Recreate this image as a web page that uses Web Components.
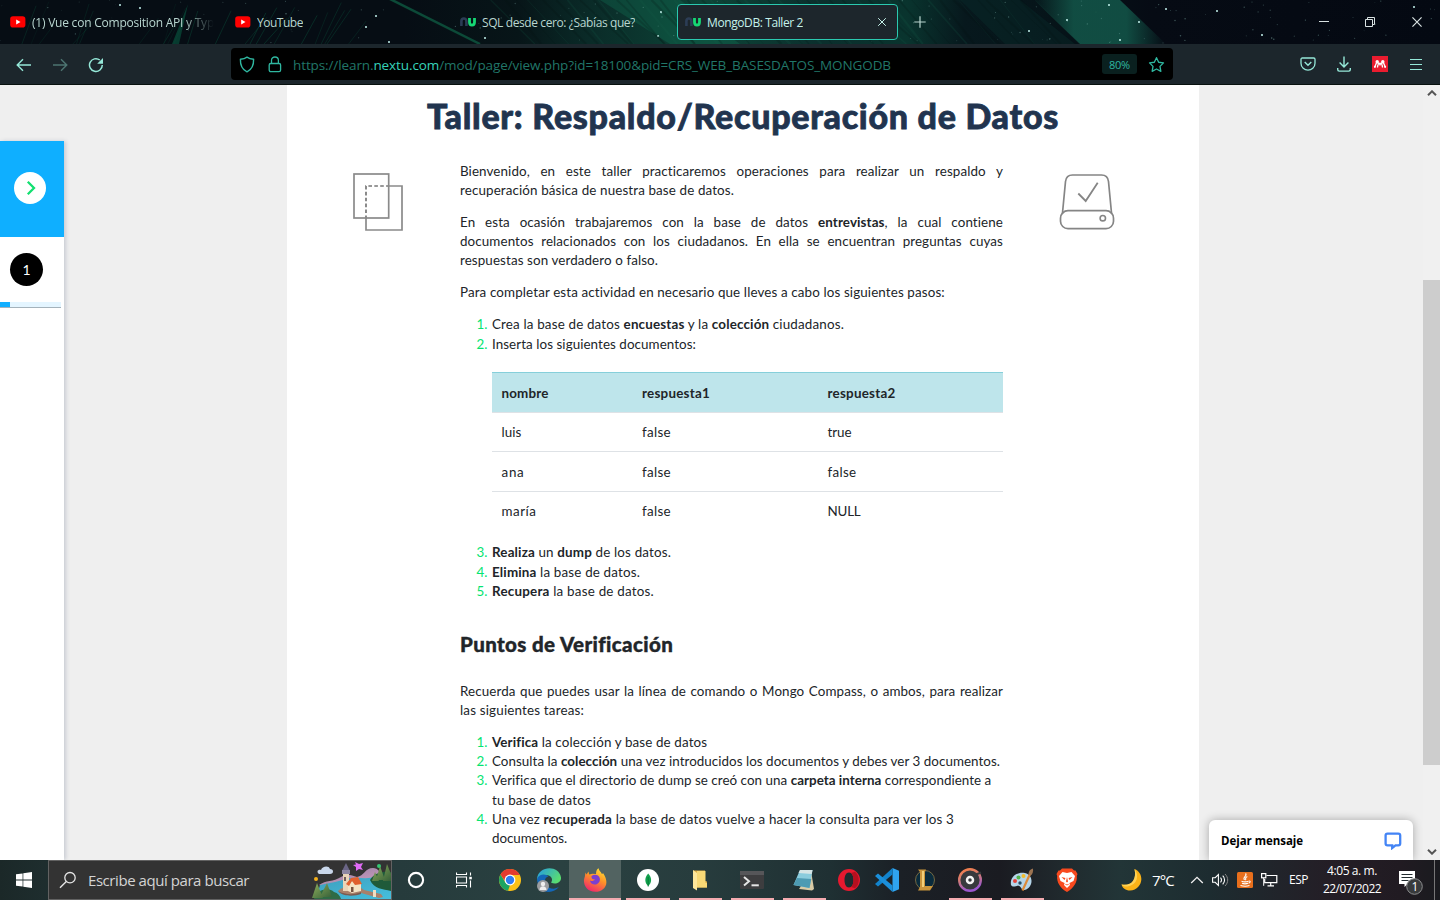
<!DOCTYPE html>
<html lang="es">
<head>
<meta charset="utf-8">
<title>MongoDB: Taller 2</title>
<style>
html,body{margin:0;height:100%;overflow:hidden}
body{background:#efefef;font-family:"Open Sans","Noto Sans",sans-serif}
</style>
</head>
<body>
<desktop-screen></desktop-screen>
<script>
const ICONS = {
 yt:['16 12','<rect x=".2" y=".3" width="15.2" height="11.2" rx="2.8" fill="#f00"/><path d="M6.2 3.4v5L10.5 5.9z" fill="#fff"/>'],
 nu:['16 10','<path d="M1.4 9V4.2C1.4.6 6.4.6 6.4 4.2V9" fill="none" stroke="#2c3d55" stroke-width="2.6"/><path d="M9.5 1v4.200c0 3.800 5 3.800 5 0V1" fill="none" stroke="#16d774" stroke-width="2.800"/>'],
 close:['10 10','<path d="M1.2 1.2l7.6 7.6M8.8 1.2L1.2 8.8" stroke="currentColor" fill="none"/>'],
 plus:['12 12','<path d="M6 .3v11.4M.3 6h11.4" stroke="currentColor" stroke-width="1.2"/>'],
 min:['10 10','<path d="M0 4.5h10" stroke="currentColor"/>'],
 max:['10 10','<path d="M.5 2.5h7v7h-7zM2.5 2.5v-2h7v7h-2" fill="none" stroke="currentColor"/>'],
 back:['16 14','<path d="M15 7H1.5M7 1.2L1.2 7 7 12.8" fill="none" stroke="currentColor" stroke-width="1.4"/>'],
 fwd:['16 14','<path d="M1 7h13.5M9 1.2L14.8 7 9 12.8" fill="none" stroke="currentColor" stroke-width="1.4"/>'],
 reload:['16 16','<path d="M14.3 8A6.4 6.4 0 1 1 11.8 3" fill="none" stroke="currentColor" stroke-width="1.5"/><path d="M15 1v5.8H9.2z" fill="currentColor"/>'],
 shield:['16 17','<path d="M8 1.1c2 1.5 4.2 2 6.6 2.2.2 5.700-1.700 10.200-6.600 12.600C3.100 13.500 1.200 9 1.400 3.300 3.800 3.100 6 2.600 8 1.100z" fill="none" stroke="currentColor" stroke-width="1.4" stroke-linejoin="round"/>'],
 lock:['14 17','<rect x="1.200" y="7.500" width="11.400" height="8.200" rx="1.600" fill="none" stroke="currentColor" stroke-width="1.300"/><path d="M3.500 7.500V4.300c0-4.400 6.900-4.400 6.900 0v3.200" fill="none" stroke="currentColor" stroke-width="1.300"/>'],
 star:['18 17','<path d="M9 1.300l2.300 4.800 5.100.7-3.700 3.700.9 5.200L9 13.300l-4.600 2.400.9-5.200L1.600 6.800l5.100-.7z" fill="none" stroke="currentColor" stroke-width="1.400" stroke-linejoin="round"/>'],
 pocket:['16 14','<path d="M2.300 1h11.400c.8 0 1.300.5 1.300 1.300v4c0 9-14 9-14 0v-4C1 1.500 1.500 1 2.300 1z" fill="none" stroke="currentColor" stroke-width="1.300"/><path d="M4.700 5L8 8.200 11.300 5" fill="none" stroke="currentColor" stroke-width="1.400"/>'],
 down:['14 16','<path d="M7 .5v10.300M2.600 6.500L7 10.900l4.400-4.400M.7 12v1.600c0 1 .6 1.500 1.500 1.500h9.600c.9 0 1.500-.5 1.500-1.500V12" fill="none" stroke="currentColor" stroke-width="1.400"/>'],
 mend:['16 16','<rect width="16" height="16" fill="#ea1c2f"/><path d="M2.600 11.400L4.600 6.500M8 9.500V6.500M5.300 6l2 2.500M10.700 6l-2 2.500M11.400 6.500l2 4.900M6 8.500l-.6 3M10 8.500l.6 3" stroke="#fff" stroke-width="1.300" fill="none"/><circle cx="5.200" cy="5.700" r="1.700" fill="#fff"/><circle cx="10.800" cy="5.700" r="1.700" fill="#fff"/><circle cx="2.900" cy="10.700" r="1" fill="#fff"/><circle cx="13.100" cy="10.700" r="1" fill="#fff"/>'],
 menu:['12 11','<path d="M0 .5h12M0 5.500h12M0 10.500h12" stroke="currentColor" stroke-width="1"/>'],
 up:['10 6','<path d="M1 5.200L5 1.300l4 3.900" fill="none" stroke="currentColor" stroke-width="2"/>'],
 dn:['10 6','<path d="M1 .8l4 3.900L9 .8" fill="none" stroke="currentColor" stroke-width="2"/>'],
 go:['32 32','<circle cx="16" cy="16" r="16" fill="#fff"/><path d="M13.800 9.800l6.200 6.200-6.200 6.200" fill="none" stroke="#12e070" stroke-width="2.300"/>'],
 layers:['50 58','<path d="M36 13h13v44H13V46" fill="none" stroke="#8a8a8a" stroke-width="1.700"/><path d="M13 46V13h23" fill="none" stroke="#777" stroke-width="1.700" stroke-dasharray="3.600 2.300"/><rect x="1" y="1" width="34.700" height="44" fill="none" stroke="#8a8a8a" stroke-width="1.700"/>'],
 drive:['56 58','<path d="M3.400 41L6.500 8.500C7 4 9.500 2 13.500 2h29c4 0 6.500 2 7 6.500L52.600 41" fill="none" stroke="#858585" stroke-width="1.700"/><rect x="1.500" y="37.700" width="53" height="18" rx="7.500" fill="none" stroke="#858585" stroke-width="1.700"/><circle cx="43.800" cy="45.200" r="2.700" fill="none" stroke="#858585" stroke-width="1.600"/><path d="M19.300 20.500l7.400 7.500L38.700 9.700" fill="none" stroke="#858585" stroke-width="1.800"/>'],
 chat:['18 18','<path d="M3.500 1.600h10.800c1.200 0 1.900.7 1.900 1.900v8c0 1.200-.7 1.900-1.900 1.900h-2.800L8.200 16v-2.600H3.500c-1.200 0-1.900-.7-1.900-1.900v-8c0-1.200.7-1.900 1.900-1.900z" fill="none" stroke="#4384f5" stroke-width="2.300"/>'],
 win:['16 16','<path d="M0 2.300L6.600 1.400v6.200H0zM7.300 1.300L16 0v7.600H7.300zM0 8.400h6.600v6.200L0 13.700zM7.300 8.400H16V16l-8.700-1.200z" fill="#fff"/>'],
 search:['18 18','<circle cx="11" cy="6.700" r="5.200" fill="none" stroke="#e6e6e6" stroke-width="1.300"/><path d="M7.300 10.400L1 16.700" stroke="#e6e6e6" stroke-width="1.400"/>'],
 cortana:['16 16','<circle cx="8" cy="8" r="6.300" fill="none" stroke="#fff" stroke-width="1.900"/>'],
 task:['16 16','<path d="M.5.500v2h10v-2M.5 15.500v-2h10v2M.5 5h10v6H.5zM14.500.500v3M14.500 8.500v7" fill="none" stroke="#fff" stroke-width="1.100"/><rect x="13.300" y="4.800" width="2.500" height="2.500" fill="#fff"/>'],
 chrome:['24 24','<circle cx="12" cy="12" r="11" fill="#fbc116"/><path d="M2.500 6.500L7.600 14.800 12 17l-2 5.800A11 11 0 0 1 2.500 6.500z" fill="#1da462"/><path d="M2.500 6.500A11 11 0 0 1 21.800 7H12L7 13z" fill="#e33b2e"/><circle cx="12" cy="12" r="5.400" fill="#fff"/><circle cx="12" cy="12" r="4.200" fill="#2f7df0"/>'],
 edge:['24 24','<defs><linearGradient id="a" x2="1" y2=".5"><stop stop-color="#239be5"/><stop offset="1" stop-color="#59dc72"/></linearGradient></defs><path d="M0 11C1-2.500 22-3.500 24 9.500c.6 5.500-6 7.500-10 5 2.600-3.500 0-7.200-4.500-7.200C4 7.300 0 10 0 15z" fill="url(#a)"/><path d="M0 11c2-5.500 9-5.700 11.500-2.500C6.500 9 6 19 14.500 20.500c3 .5 5.500-.5 7.500-1.700C16 27 1 26 0 11z" fill="#1467b8"/><circle cx="6" cy="18" r="6" fill="#9b9da0"/><circle cx="6" cy="16" r="2.200" fill="#eee"/><path d="M2.500 22c0-5 7-5 7 0z" fill="#eee"/>'],
 firefox:['24 24','<defs><linearGradient id="a" x1=".8" x2=".3" y2="1"><stop stop-color="#ffe436"/><stop offset=".45" stop-color="#ff9128"/><stop offset="1" stop-color="#f0256d"/></linearGradient></defs><path d="M2.500 4.500l1 2 2-3 .7 3 3-.8L13 6c0-3 1-5 2.600-5.800.3 2.600 2.400 3.300 3.300 5.800l1.300-.7C28 17 20 23.800 12.500 23.800 4 23.800.5 17 1 12c.2-2 1-3 1-4.500z" fill="url(#a)"/><path d="M8.500 8c5-3.500 10 1 8 5.500-2 4.500-9 4-9.500-1 2 1 3.500.5 5-1-2 .2-4-1-3.500-3.500z" fill="#7b3fd0"/>'],
 mongo:['24 24','<circle cx="12" cy="12" r="11" fill="#fff"/><path d="M12.200 5.500c4.300 4.500 3.400 9.500 0 12.500-3.500-3-4.200-8 0-12.500z" fill="#11a04c"/><path d="M12.200 9v9.500" stroke="#067d3a"/>'],
 folder:['24 24','<path d="M5 2.500H17V13l2 .5v6H6.500z" fill="#dfae46"/><path d="M9 3h8.500v12h1.500v4.500H9z" fill="#f9d976"/><path d="M5 2l4 3v17.500L5 20z" fill="#ffe79b"/>'],
 term:['24 24','<rect y="3" width="24" height="18" rx="1" fill="#3d3d3f"/><rect y="3" width="24" height="4" fill="#565659"/><path d="M4 9l5 4.200-5 4.200" fill="none" stroke="#e5e5e5" stroke-width="2"/><path d="M11.500 17.300h7.300" stroke="#e5e5e5" stroke-width="2"/>'],
 note:['24 24','<path d="M19 3l3 18-2 1.500L7 21z" fill="#d9cba6"/><path d="M8 2h12.500L17.500 20 1.500 17z" fill="#8accdd"/><path d="M8 2h12.500L19.700 6 6.500 5z" fill="#d5e5e6"/><path d="M5 10l14.300 1-1.800 9L1.500 17z" fill="#4d9bb3"/>'],
 opera:['24 24','<path fill-rule="evenodd" d="M12 1a11 11 0 1 0 0 22 11 11 0 0 0 0-22zm0 3.500c3 0 4.500 3.500 4.500 7.500S15 19.500 12 19.500 7.500 16 7.500 12 9 4.500 12 4.500z" fill="#e6192f"/><path d="M18 3.700A11 11 0 0 1 18 20.300L14 19c3.300-3 3.300-11 0-14z" fill="#b5101f"/>'],
 code:['24 24','<path d="M17.500 0L24 2.800V21.200L17.500 24z" fill="#2fa4f0"/><path d="M17.500 0v6.500L3 18.500 0 16z" fill="#1283cc"/><path d="M0 8l3-2.500L17.500 17.500V24z" fill="#1b8fda"/>'],
 lol:['24 24','<circle cx="12" cy="12" r="9.500" fill="#0a2b3c" stroke="#8b7946" stroke-width=".8"/><path d="M5 1.500h8L12 4v14h8l-3 4.500H5L7 19V4z" fill="#c9953b"/><path d="M9 3h2v16H9z" fill="#f1cf79"/>'],
 groove:['24 24','<defs><linearGradient id="a" y2="1" x2=".3"><stop stop-color="#f98045"/><stop offset=".5" stop-color="#cf7a78"/><stop offset="1" stop-color="#9a56cf"/></linearGradient></defs><circle cx="12" cy="12" r="10.800" fill="#37393d" stroke="url(#a)" stroke-width="2.400"/><path d="M18 6.500l5-2" stroke="#37393d" stroke-width="2"/><circle cx="12" cy="12" r="3" fill="#37393d" stroke="#f4f4f4" stroke-width="2.500"/>'],
 paint:['24 24','<path d="M1 17C-.5 8 8 3.500 15 5c8 2 8 11 3.500 15-4 3.500-7 1.500-8-1-2.500-3.500-7 2-9.500-2z" fill="#b5d5e9"/><circle cx="5" cy="13" r="2" fill="#e4433a"/><circle cx="8.500" cy="9.500" r="2" fill="#51b44a"/><circle cx="13.500" cy="8" r="2" fill="#f2bd2d"/><circle cx="10" cy="15" r="1.700" fill="#244d66"/><path d="M12.500 22.500L20 6" stroke="#dc8a38" stroke-width="2.200"/><path d="M18.500 6c0-3 2-5 4.500-5.500.5 3-.5 6-2.500 7z" fill="#9c7452"/>'],
 brave:['24 24','<path d="M7 .5h10l2 2h1.500L22.500 6l-.7 2c.7 6-3 12-9.800 16C5 20 1.500 14 2.200 8L1.500 6l2-3.500H5z" fill="#f8491e"/><path d="M7.500 4l4.500 1 4.500-1 3.500 4-1.500 5-4 2 .5 2L12 20l-3-3 .5-2-4-2L4 8z" fill="#fff"/><path d="M6.500 9l4 1-1 2zM17.500 9l-4 1 1 2zM12 9l-1 4.500 1 1 1-1zM9 15.500l3 1 3-1-3 2z" fill="#f8491e"/>'],
 moon:['24 24','<path d="M14.500 1C26 6 22 22 10 22.500 5.500 22.500 2.500 20 1.500 16.500 11 18.500 17 12 14.500 1z" fill="#fbb318"/><path d="M14.500 1c5 6 3 16-7 17.500-3 .2-4.500-.5-6-2C11 18.500 17 12 14.500 1z" fill="#ffd256"/>'],
 chev:['14 8','<path d="M1.200 7L7 1.300 12.800 7" fill="none" stroke="#f1f1f1" stroke-width="1.300"/>'],
 sound:['17 14','<path d="M.6 4.700h2.600L6.400 1.600v10.800L3.200 9.300H.6z" fill="none" stroke="#fff" stroke-width="1.100"/><path d="M8.500 4.700c1.300 1.300 1.300 3.300 0 4.600M10.700 2.700c2.500 2.500 2.500 6.100 0 8.600" fill="none" stroke="#fff" stroke-width="1.100"/><path d="M13 1c3.600 3.500 3.600 8.500 0 12" fill="none" stroke="#888" stroke-width="1"/>'],
 java:['16 16','<rect width="16" height="16" rx="1.500" fill="#e86f1c"/><path d="M8.500 1.500c2.500 2.500-3.500 3.300-1 6.500M10.300 4.500C7 6 9.500 6.500 8.500 8.300M4.500 9.200c2 .8 5 .8 7 0M5 11.300c2 .7 4 .7 6 0M3.500 13.500c3 .9 6.500.9 9 0M11.800 9c2-.3 1.800 1.600-.3 2.200" fill="none" stroke="#fff" stroke-width="1.100"/>'],
 net:['17 14','<path d="M5.500 2.500h10.300v7.200H3.700V6M9.700 9.700v3M6.500 12.900h6.500" fill="none" stroke="#fff" stroke-width="1.200"/><rect x=".6" y=".6" width="4.200" height="4.200" fill="none" stroke="#fff" stroke-width="1.200"/><path d="M2.700 4.800v8" stroke="#fff"/>'],
 notif:['26 26','<path d="M1 1h16v13H9.500L6.500 17v-3H1z" fill="#fff"/><path d="M3.500 4.500h11M3.500 7.500h11M3.500 10.500h7" stroke="#222b2f" stroke-width="1.200"/><circle cx="16.500" cy="16.500" r="7.800" fill="#383a3c" stroke="#8c8d8e"/>'],
 village:['79 38','<defs><linearGradient id="w" y2="1"><stop stop-color="#3d9dbd"/><stop offset="1" stop-color="#45bfdd"/></linearGradient><linearGradient id="m" y2="1"><stop stop-color="#8f7aa0"/><stop offset="1" stop-color="#d9a5c4"/></linearGradient><linearGradient id="t" y2="1"><stop stop-color="#8fae5c"/><stop offset="1" stop-color="#355f38"/></linearGradient></defs><path d="M7 24c7-5 14-3 22-8 6-4 10-2 16 0 7-1 8-9 16-9 5 0 7 5 13 8l5 2v8H10z" fill="url(#m)"/><path d="M8 24c10-2 20-4 30-7 10-1 18 2 26-2l15 3v20H4z" fill="url(#w)"/><path d="M58 19c4-7 12-9 21-8v19c-8-2-17-2-21-11z" fill="#1f5a3a"/><path d="M64 19l4-14 5 14zM71 20l4-17 4 10v7zM60 20l3-9 4 9z" fill="url(#t)"/><path d="M26 30c6-6 20-6 26-1l17 4 2 3-4 1-18-5c-7 3-20 2-23-2z" fill="#a9806a"/><path d="M26 30c7 4 17 4 23 1v2c-8 3-20 2-23-3z" fill="#7c5a4e"/><path d="M2 38c1-8 14-13 20-7 4 1 6 4 7 7z" fill="#2f6b45"/><path d="M0 37l5-15 6 15zM8 36l7-14 5 14z" fill="url(#t)"/><path d="M31 13h6v17h-6z" fill="#ead5b8"/><path d="M32 16h2v4h-2z" fill="#6f5c58"/><path d="M30.500 9L34 2l3.500 7z" fill="#6a6585"/><path d="M30 9h8v4h-8z" fill="#8d87a2"/><path d="M36 23l4-3 9 3v7l-9 2-4-2z" fill="#f4e3c5"/><path d="M34 23l5-6 7-1 4 7-7 1-3-4-3 5z" fill="#e0602f"/><path d="M39 26h2.500v5H39z" fill="#765240"/><path d="M61 29h3v7h-3z" fill="#f1dfc3"/><path d="M7 13c-3-2-1-5 2-4 1-4 8-5 9-1 4 0 4 5 0 5z" fill="#c9d7ea"/><path d="M43 1l4 2 4-1-2 4 2 3-4-1-3 2v-4l-3-2 3-.5z" fill="#e06bf5"/><circle cx="67" cy="5" r="2" fill="#35c773"/><circle cx="4" cy="18" r="2" fill="#f6b11b"/>']
};
const define=(name,css,html,extra)=>customElements.define(name,class extends HTMLElement{
 constructor(){super();this.attachShadow({mode:'open'}).innerHTML=`<style>:host{box-sizing:border-box}*{box-sizing:border-box}${css}</style>${typeof html==='function'?html(this):html}`}
 connectedCallback(){extra&&extra(this)}
});

/* <ui-icon name w h> */
define('ui-icon',':host{display:inline-flex;flex:none}span,svg{display:block}','<span></span>',el=>{
 const [vb,body]=ICONS[el.getAttribute('name')];const [w,h]=vb.split(' ');
 el.shadowRoot.querySelector('span').innerHTML=`<svg width="${el.getAttribute('w')||w}" height="${el.getAttribute('h')||h}" viewBox="0 0 ${vb}">${body}</svg>`;
});
/* <fit-text w> one line of text tracked to a given measure; "spread" widens the word gaps instead */
define('fit-text',':host{display:inline-block;flex:none;white-space:nowrap}:host([spread]){display:block;text-align-last:justify}','<span><slot></slot></span>',el=>{
 const w=+el.getAttribute('w');
 if(el.hasAttribute('spread')){el.style.width=w+'px';return}
 el.style.letterSpacing='0px';
 const nat=el.shadowRoot.querySelector('span').getBoundingClientRect().width;
 el.style.letterSpacing=((w-nat)/el.textContent.length)+'px';
 el.style.width=w+'px';
});

/* theme picture behind the tab strip */
const stars=()=>{let s=7,o='';const r=()=>(s=(s*16807)%2147483647)/2147483647;
 for(let i=0;i<130;i++){const x=r()*1440,y=r()*44,a=.15+r()*.3;o+=`<circle cx="${x.toFixed(1)}" cy="${y.toFixed(1)}" r="${(.4+r()*.35).toFixed(2)}" fill="#9fd8cf" opacity="${a.toFixed(2)}"/>`}
 for(const [x,y] of [[140,8],[120,5],[376,16],[366,27],[389,42],[485,38],[661,12],[658,36],[1029,31],[1067,20],[1120,40],[1139,22],[1262,35],[1217,11],[1414,7],[1166,9],[1109,5]])o+=`<circle cx="${x}" cy="${y}" r="1" fill="#c5f3ee"/>`;
 for(let i=0;i<46;i++){const x=490+i*12+r()*8;o+=`<path d="M${x} 0l${34+r()*16} 44" stroke="${i%3?'#04100f':'#15604a'}" stroke-width="${(.5+r()*2).toFixed(1)}" opacity=".18"/>`}
 for(let i=0;i<24;i++){const x=20+r()*330;o+=`<path d="M${x} 44l${10+r()*14} -${20+r()*24}" stroke="#0d6a4a" stroke-width=".8" opacity="${(.12+r()*.3).toFixed(2)}"/>`}
 return o};
define('tab-strip',`:host{display:grid;height:44px;background:#060c13;overflow:hidden;font-size:12px;color:#b9d6d0}
 svg.sky,.row{grid-area:1/1}
 .row{display:flex;align-items:center;height:44px;position:relative}
 `,()=>`<svg class="sky" width="1440" height="44"><defs><linearGradient id="g"><stop stop-color="#060d14"/><stop offset=".28" stop-color="#060d14"/><stop offset=".36" stop-color="#071518"/><stop offset=".41" stop-color="#0a2b28"/><stop offset=".49" stop-color="#0d4437"/><stop offset=".57" stop-color="#0b2f2d"/><stop offset=".63" stop-color="#09342e"/><stop offset=".67" stop-color="#07181d"/><stop offset=".73" stop-color="#061419"/><stop offset=".8" stop-color="#060b14"/><stop offset="1" stop-color="#040912"/></linearGradient><linearGradient id="b"><stop stop-color="#125347" stop-opacity="0"/><stop offset=".3" stop-color="#125347"/><stop offset=".7" stop-color="#125347"/><stop offset="1" stop-color="#125347" stop-opacity="0"/></linearGradient></defs>
 <rect width="1440" height="44" fill="url(#g)"/><path d="M600 0h80l60 44h-70z" fill="#117052" opacity=".35"/><path d="M1034 0h86l46 44h-86z" fill="url(#b)" opacity=".9"/><path d="M960 0h60l55 44h-70z" fill="#0b3532" opacity=".3"/><path d="M388-2l92 46" stroke="#0c4a38" stroke-width="2.500"/><path d="M172 44l16-40-9 40z" fill="#0a8057" opacity=".4"/>${stars()}</svg>
 <div class="row"><slot></slot></div>`);
define('browser-tab',`:host{display:flex;align-items:center;width:225px;height:36px;padding-left:10px}
 :host([active]){width:221px;margin-left:-8px;padding-left:7px;background:#1d262c;border:1px solid #2bc9b0;border-radius:4px;color:#c5f2ea}
 .t{margin-left:6px;padding-top:1px;overflow:hidden}:host([fade]) .t{width:182px;-webkit-mask:linear-gradient(90deg,#000 150px,transparent 182px)}
 :host([active]) .x{margin-left:auto;margin-right:10px}.x{display:flex}`,'<slot name="i"></slot><div class="t"><slot></slot></div><div class="x"><slot name="x"></slot></div>');
define('window-buttons',':host{display:flex;gap:36px;margin-left:auto;padding-right:17px;color:#d9e2e2;align-items:center}','<ui-icon name="min"></ui-icon><ui-icon name="max"></ui-icon><ui-icon name="close" w="12" h="12"></ui-icon>');
define('nav-bar',`:host{display:flex;align-items:center;height:41px;background:#1c262c;border-bottom:1px solid #08110f;color:#95e8d8}
 .l{display:flex;gap:20px;width:231px;padding-left:16px;align-items:center;padding-top:1px}.l :nth-child(2){opacity:.4}
 .u{display:flex;align-items:center;width:942px;height:32px;background:#000;border-radius:4px;padding:0 8px;color:#2fb7a0;font-size:13.500px}
 .u .f{margin-left:11px;color:#217668;padding-top:1px}.u b{font-weight:400;color:#36d3ba}
 .z{margin-left:auto;width:35px;height:20px;background:#0a201f;border-radius:3px;display:flex;align-items:center;justify-content:center;font-size:11px;margin-right:11px}
 .r{margin-left:auto;display:flex;align-items:center;padding-right:18px}`,
 `<div class="l"><ui-icon name="back"></ui-icon><ui-icon name="fwd"></ui-icon><ui-icon name="reload"></ui-icon></div>
 <div class="u"><ui-icon name="shield"></ui-icon><ui-icon name="lock" style="margin-left:13px"></ui-icon><fit-text class="f" w="598">https://learn.<b>nextu.com</b>/mod/page/view.php?id=18100&amp;pid=CRS_WEB_BASESDATOS_MONGODB</fit-text><div class="z"><fit-text w="21">80%</fit-text></div><ui-icon name="star" w="17"></ui-icon></div>
 <div class="r"><ui-icon name="pocket"></ui-icon><ui-icon name="down" style="margin-left:21px"></ui-icon><ui-icon name="mend" style="margin-left:21px"></ui-icon><ui-icon name="menu" style="margin-left:22px"></ui-icon></div>`);

define('course-rail',`:host{display:block;width:64px;height:719px;margin-top:56px;background:#fff;box-shadow:2px 0 4px #c9ccd3}
 .go{height:96px;background:#0fafff;display:flex;align-items:center;justify-content:center;padding:0 4px 2px 0}
 .s{height:65px;width:61px;display:flex;padding:16px 0 0 10px}
 .n{width:33px;height:33px;border-radius:50%;background:#000;color:#fff;display:flex;align-items:center;justify-content:center;font:14px Lato,sans-serif}
 .b{height:6px;width:61px;background:linear-gradient(90deg,#12afff 10px,#e4f5ff 10px);border-bottom:1px solid #a4b2bb}`,'<div class="go"><ui-icon name="go"></ui-icon></div><div class="s"><div class="n">1</div></div><div class="b"></div>');

define('step-item',`:host{display:flex;line-height:var(--lh,19.400px)}.n{width:27.500px;margin-right:4.500px;text-align:right;color:#05e471;flex:none}`,'<div class="n"><slot name="n"></slot></div><div><slot></slot></div>');
define('data-row',`:host{display:grid;grid-template-columns:140.500px 185.500px 1fr;align-items:center;height:39.400px;padding-left:9.500px;border-top:1px solid #dee2e6;margin-left:32px}
 :host([head]){background:#bee5eb;border-top-color:#86cfda;font-weight:700;height:40px}`,'<slot></slot>');
const L=(w,t,s)=>`<fit-text w="${w}"${s?' spread':''}>${t}</fit-text>`;
const step=(n,...ls)=>`<step-item><span slot="n">${n}.</span>${ls.map(([w,t])=>`<div>${L(w,t)}</div>`).join('')}</step-item>`;
const row=(h,...c)=>`<data-row${h?' head':''}>${c.map(([w,t])=>L(w,t)).join('')}</data-row>`;
define('workshop-page',`:host{display:grid;grid-template-columns:173px 543px 196px;grid-template-rows:76.600px auto;width:912px;height:775px;background:#fff;overflow:hidden;font:13.400px Lato,"Open Sans",sans-serif;color:#212529}
 h1{grid-column:1/4;margin:0;font-size:34px;font-weight:900;color:#21344f;text-align:center;line-height:62px;-webkit-text-stroke:.8px #21344f}
 .a{padding:11.400px 0 0 65.500px}.c{padding:11.600px 0 0 55.600px}
 p{margin:0 0 12.800px;line-height:19.200px;letter-spacing:.1px}
 fit-text{vertical-align:top}b{font-weight:700}.v{--lh:19.200px}
 .t{margin:18px 0 13.200px}h2{font-size:20.500px;font-weight:900;margin:30px 0 26.100px;line-height:24px;-webkit-text-stroke:.4px #212529}`,
 `<h1>${L(632,'Taller: Respaldo/Recuperación de Datos')}</h1>
 <div class="a"><ui-icon name="layers"></ui-icon></div>
 <div>
 <p>${L(543,'Bienvenido, en este taller practicaremos operaciones para realizar un respaldo y',1)}${L(274,'recuperación básica de nuestra base de datos.')}</p>
 <p>${L(543,'En esta ocasión trabajaremos con la base de datos <b>entrevistas</b>, la cual contiene',1)}${L(543,'documentos relacionados con los ciudadanos. En ella se encuentran preguntas cuyas',1)}${L(198,'respuestas son verdadero o falso.')}</p>
 <p>${L(485,'Para completar esta actividad en necesario que lleves a cabo los siguientes pasos:')}</p>
 ${step(1,[352,'Crea la base de datos <b>encuestas</b> y la <b>colección</b> ciudadanos.'])}${step(2,[204,'Inserta los siguientes documentos:'])}
 <div class="t">${row(1,[47,'nombre'],[68,'respuesta1'],[68,'respuesta2'])}${row(0,[20,'luis'],[29,'false'],[24,'true'])}${row(0,[23,'ana'],[29,'false'],[29,'false'])}${row(0,[35,'maría'],[29,'false'],[33,'NULL'])}</div>
 ${step(3,[179,'<b>Realiza</b> un <b>dump</b> de los datos.'])}${step(4,[148,'<b>Elimina</b> la base de datos.'])}${step(5,[162,'<b>Recupera</b> la base de datos.'])}
 <h2>${L(213,'Puntos de Verificación')}</h2>
 <p>${L(543,'Recuerda que puedes usar la línea de comando o Mongo Compass, o ambos, para realizar',1)}${L(124,'las siguientes tareas:')}</p>
 <div class="v">${step(1,[215,'<b>Verifica</b> la colección y base de datos'])}${step(2,[508,'Consulta la <b>colección</b> una vez introducidos los documentos y debes ver 3 documentos.'])}${step(3,[499,'Verifica que el directorio de dump se creó con una <b>carpeta interna</b> correspondiente a'],[99,'tu base de datos'])}${step(4,[462,'Una vez <b>recuperada</b> la base de datos vuelve a hacer la consulta para ver los 3'],[75,'documentos.'])}</div>
 </div>
 <div class="c"><ui-icon name="drive"></ui-icon></div>`);
define('chat-launcher',`:host{display:flex;align-items:center;justify-content:space-between;width:204px;height:40px;background:#fff;border-radius:6px 6px 0 0;box-shadow:0 0 10px rgba(0,0,0,.3);padding:1px 11px 0 12px;font-size:11.500px;font-weight:700;color:#000}`,'<fit-text w="82">Dejar mensaje</fit-text><ui-icon name="chat" style="margin-top:1px"></ui-icon>');
define('scroll-bar',`:host{display:flex;flex-direction:column;width:17px;height:775px;background:#f0f0f0;align-items:center;color:#555}
 i{display:block;width:17px;height:485px;background:#cdcdcd;margin:184px 0 84px}ui-icon{margin-top:5px}`,'<ui-icon name="up"></ui-icon><i></i><ui-icon name="dn" style="margin:0"></ui-icon>');

define('task-app',`:host{display:flex;align-items:center;justify-content:center;height:40px;position:relative;flex:none}
 :host([open])::after{content:"";position:absolute;left:4.500px;right:4px;bottom:0;height:2px;background:#f4abb0}
 :host([focus]){background:#526361}:host([focus])::after{left:0;right:0}`,'<slot></slot>');
define('task-bar',`:host{display:flex;align-items:center;width:1440px;height:40px;overflow:hidden;color:#fff;background:linear-gradient(90deg,#1b2828 0,#1f2f30 60px,#263b3c 400px,#2a4141 560px,#273c3d 700px,#1f3033 830px,#1b2026 900px,#1a1b21 1000px,#20292d 1060px,#223537 1120px,#1d2c30 1210px,#241e26 1330px,#211b22 1400px,#1a1b1f 1440px)}
 .s{width:344px;height:40px;background:#333;border:1px solid #626262;display:flex;align-items:center;color:#d4d4d4;font-size:15px;flex:none}
 .s .v{margin-left:auto;height:38px}
 .tray{display:flex;align-items:center;font-size:12px}
 .clock{width:64px;font-size:12px;line-height:18px;text-align:center;margin-left:12px}
 .n{position:relative;margin-left:14px;height:26px;margin-top:6px}.n span{position:absolute;left:13.500px;top:8px;font-size:12px;line-height:17px}
 .d{margin-left:10px;height:40px;border-left:1px solid #777}`,
 ()=>{const A=(n,w,a='',s=24)=>`<task-app style="width:${w}px" ${a}><ui-icon name="${n}" w="${s}" h="${s}"></ui-icon></task-app>`;
 return A('win',48,'',16)+`<div class="s"><ui-icon name="search" style="margin-left:10px"></ui-icon><fit-text w="161" style="margin-left:11px">Escribe aquí para buscar</fit-text><ui-icon class="v" name="village"></ui-icon></div>`+
 A('cortana',48,'',18)+A('task',47,'',16)+A('chrome',45)+`<task-app style="width:37px;padding-right:3px"><ui-icon name="edge" w="24" h="24"></ui-icon></task-app>`+A('firefox',52,'open focus')+A('mongo',53,'open')+A('folder',52,'open')+A('term',52,'open')+A('note',52,'open')+A('opera',38)+A('code',38)+A('lol',38)+A('groove',52,'open')+A('paint',52,'open')+A('brave',38)+
 `<div class="tray"><ui-icon name="moon" w="24" h="24" style="margin-left:34px"></ui-icon><fit-text w="22" style="margin-left:8px;font-size:15px">7°C</fit-text><ui-icon name="chev" style="margin-left:16px"></ui-icon><ui-icon name="sound" style="margin-left:8px"></ui-icon><ui-icon name="java" style="margin-left:8px"></ui-icon><ui-icon name="net" style="margin-left:8px"></ui-icon><fit-text w="19" style="margin-left:11px;margin-top:-2px">ESP</fit-text><div class="clock"><fit-text w="50">4:05 a. m.</fit-text><fit-text w="58">22/07/2022</fit-text></div><div class="n"><ui-icon name="notif"></ui-icon><span>1</span></div><div class="d"></div></div>`});

define('desktop-screen',`:host{display:grid;grid-template-rows:44px 41px 775px 40px;width:1440px;height:900px;overflow:hidden}
 .m{display:flex;background:#efefef;overflow:hidden}.left{width:287px}.right{flex:1;display:flex;align-items:flex-end;padding-left:10px}`,
 `<tab-strip>
 <browser-tab fade><ui-icon slot="i" name="yt"></ui-icon><fit-text w="182">(1) Vue con Composition API y Typ</fit-text></browser-tab>
 <browser-tab><ui-icon slot="i" name="yt"></ui-icon><fit-text w="46">YouTube</fit-text></browser-tab>
 <browser-tab style="width:235px"><ui-icon slot="i" name="nu"></ui-icon><fit-text w="153">SQL desde cero: ¿Sabías que?</fit-text></browser-tab>
 <browser-tab active><ui-icon slot="i" name="nu"></ui-icon><fit-text w="96">MongoDB: Taller 2</fit-text><ui-icon slot="x" name="close"></ui-icon></browser-tab>
 <ui-icon name="plus" style="margin-left:16px"></ui-icon><window-buttons></window-buttons></tab-strip>
 <nav-bar></nav-bar>
 <div class="m"><div class="left"><course-rail></course-rail></div><workshop-page></workshop-page><div class="right"><chat-launcher></chat-launcher></div><scroll-bar></scroll-bar></div>
 <task-bar></task-bar>`);
</script>
</body>
</html>
